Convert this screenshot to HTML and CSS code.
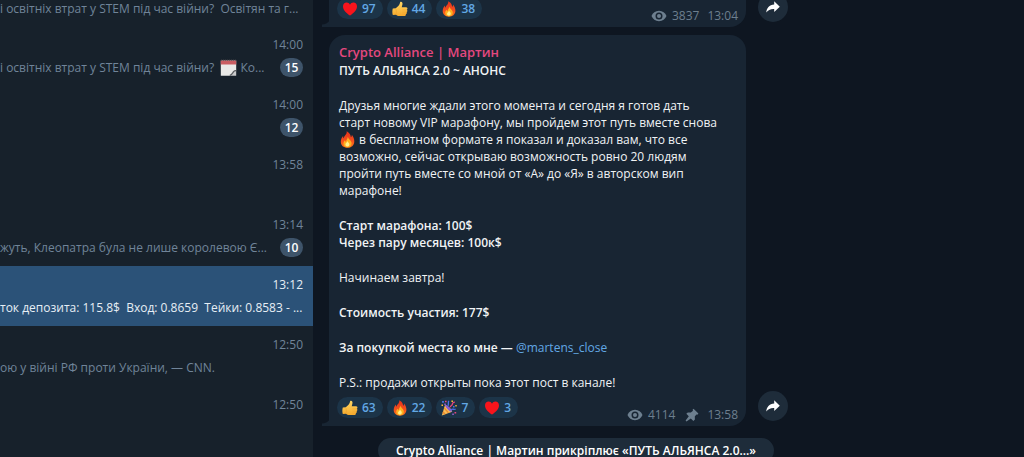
FILE: index.html
```html
<!DOCTYPE html>
<html lang="uk">
<head>
    <meta charset="UTF-8">
    <meta name="viewport" content="width=device-width, initial-scale=1.0">
    <title>Crypto Alliance | Мартин</title>
    <link rel="stylesheet" href="styles.css">
</head>
<body>
    <!-- Shared icons -->
    <svg class="sprite" aria-hidden="true">
        <defs>
            <linearGradient id="flame" x1="0" y1="0" x2="0" y2="1">
                <stop offset="0" stop-color="#e8301a"/>
                <stop offset="0.6" stop-color="#f4511e"/>
                <stop offset="1" stop-color="#ff7a1a"/>
            </linearGradient>
            <linearGradient id="thumb" x1="0" y1="0" x2="0" y2="1">
                <stop offset="0" stop-color="#ffd764"/>
                <stop offset="1" stop-color="#f5a92c"/>
            </linearGradient>
        </defs>
        <symbol id="i-heart" viewBox="0 0 16 16">
            <path fill="#f8141c" d="M8 14.6C5.6 12.9 1 9.4 1 5.4 1 3 2.6 1.5 4.6 1.5c1.500 0 2.700.8 3.400 2.200.7-1.400 1.900-2.200 3.400-2.200 2 0 3.600 1.500 3.600 3.900 0 4-4.600 7.500-7 9.200z"/>
        </symbol>
        <symbol id="i-thumb" viewBox="0 0 16 16">
            <path fill="url(#thumb)" d="M8.600.8c1.300-.3 2 .8 1.900 2.100-.1 1.300-.6 2.400-.8 3.400h4.200c1.900 0 2 2 .8 2.500 1 .5.9 2-.2 2.300.7.700.4 1.900-.7 2.100.3.900-.3 1.800-1.600 1.800H7.500c-1.700 0-2.700-.4-3.500-1.200l-3.200.2c-.6-1.800-.6-4.600 0-6.400l3-.4c1.900-1.200 3.500-3.100 4-4.600.2-.8.200-1.600.8-1.800z"/>
            <path fill="none" stroke="#eca22f" stroke-width=".6" d="M10.500 8.900h4.100M10.400 11.100h4M10.400 13.100h3.300M4 8.200c.5 1.500.5 3.500.1 5.300"/>
        </symbol>
        <symbol id="i-fire" viewBox="0 0 16 16">
            <path fill="url(#flame)" d="M7.200.3c3.300 1.700 3.700 4 4 5.600.7-.5.900-1.300.8-2.300 1.600 1.800 2.500 4.100 2.400 6.400-.2 3.500-2.900 5.700-6.400 5.700-3.700 0-6.300-2.300-6.300-5.700 0-2.500 1.200-4.200 2.200-5.400 0 1 .2 1.800.8 2.200C4.500 4.500 7.800 3.600 7.200.3z"/>
            <path fill="#ffb01f" d="M8.300 5.400c.3 2.200 3.900 3.700 3.500 6.500-.3 2.100-1.900 3.300-3.900 3.300s-3.700-1.300-3.700-3.300c0-1.500.8-2.500 1.500-3.100.1.800.4 1.300.9 1.500-.2-1.900 1.700-2.600 1.700-4.900z"/>
            <path fill="#fff08a" d="M8 9.500c.3 1.300 1.900 1.800 1.800 3.300-.1 1.100-.9 1.800-1.900 1.800S6 13.900 6 12.800c0-1.400 1.800-1.800 2-3.300z"/>
        </symbol>
        <symbol id="i-party" viewBox="0 0 16 16">
            <path fill="#f7c05a" d="M.8 15.400 4 4.900c3 .9 6 3.700 7.200 6.800z"/>
            <path fill="#f08a2d" d="m2.200 10.900 2.600 3-1.500.5-1.800-1.700zM3.500 7.300l4.600 5.200-1.400.5L3 8.700z"/>
            <ellipse cx="7.600" cy="8.300" rx="1.300" ry="4.600" fill="#8a5fd0" transform="rotate(-45 7.600 8.300)"/>
            <path fill="none" stroke="#e8467c" stroke-width="1.300" d="M9.200 7.300c.2-2 2-1.600 2.200-3.200.1-1.400 1.300-1.900 2.500-1.900"/>
            <path fill="none" stroke="#4a6fe8" stroke-width="1.300" d="M6.800 5.800C8.300 4.400 6.500 2.800 7.800.8M10.100 9.800c1.400-1.400 2.800.2 4.600-.8"/>
            <path fill="#4a73e0" d="M1.100 1.100h1.800v1.700H1.100zM12 5.900h1.600v1.600H12z"/>
            <path fill="#e8467c" d="M4 .7h1.600v1.600H4zM13.500 12h1.700v1.600h-1.700z"/>
            <path fill="#f7b938" d="M10.400.6H12v1.500h-1.600zM.5 4.500H2V6H.5zM14.300 5h1.400v1.500h-1.400z"/>
            <path fill="#9c63d8" d="M3.300 3.400h1.500v1.500H3.300zM11.300 13.500h1.500V15h-1.500z"/>
        </symbol>
        <symbol id="i-eye" viewBox="0 0 16 12">
            <path fill="#6d7f8f" fill-rule="evenodd" d="M8 .8c3.500 0 6.300 2.100 7.500 5.200-1.200 3.100-4 5.200-7.500 5.200S1.700 9.100.5 6C1.700 2.900 4.500.8 8 .8zm0 1.700a3.500 3.500 0 1 0 0 7 3.500 3.500 0 0 0 0-7z"/>
            <circle cx="8" cy="6" r="2" fill="#6d7f8f"/>
        </symbol>
        <symbol id="i-pin" viewBox="0 0 14 14">
            <path fill="#6d7f8f" d="M8.500.7 13.400 5.600l-1 1.100-1-.2-1.600 2 .1 3.100-1.500 1.400-2.600-2.600L1.500 13.500l-.9-.9 3.200-4.300-2.500-2.500 1.500-1.400 3.100.1 2.100-1.700-.4-1.100z"/>
        </symbol>
        <symbol id="i-share" viewBox="0 0 14 12">
            <path fill="#fff" d="M8.200.3 13.800 5.700 8.200 11V7.900C4.600 7.700 2.200 8.800.3 11.600.5 7 3.300 3.700 8.200 3.400z"/>
        </symbol>
        <symbol id="i-note" viewBox="0 0 17 17">
            <path fill="#e9e9e7" d="M.8 1.500h15.400v9.200l-6 6H.8z"/>
            <path fill="#c95d62" d="M.8 1.500h15.400v4H.8z"/>
            <path fill="none" stroke="#4b4a4e" stroke-width="1.400" stroke-dasharray="1 1" d="M1.200 1.100h14.800"/>
            <path fill="#c8c9ca" d="M10.300 16.700c.4-2.600 2.500-4.500 5.900-6v6z"/>
            <path fill="none" stroke="#5b5d60" stroke-width="1.300" d="M9.800 16.300c2.400-.4 2.800-2.500 4-3.900.7-.7 1.500-.8 2.400-.7"/>
        </symbol>
    </svg>

    <div class="app">
        <aside class="sidebar">
            <ul class="dialogs">
                <li class="dialog">
                    <div class="row"><p class="preview">і освітніх втрат у STEM під час війни?&nbsp; Освітян та г...</p></div>
                </li>
                <li class="dialog">
                    <time>14:00</time>
                    <div class="row">
                        <p class="preview">і освітніх втрат у STEM під час війни?&nbsp; <svg class="emoji"><use href="#i-note"/></svg> Ко...</p>
                        <span class="badge">15</span>
                    </div>
                </li>
                <li class="dialog">
                    <time>14:00</time>
                    <div class="row"><span class="badge">12</span></div>
                </li>
                <li class="dialog">
                    <time>13:58</time>
                </li>
                <li class="dialog">
                    <time>13:14</time>
                    <div class="row">
                        <p class="preview">жуть, Клеопатра була не лише королевою Є...</p>
                        <span class="badge">10</span>
                    </div>
                </li>
                <li class="dialog active">
                    <time>13:12</time>
                    <div class="row"><p class="preview">ток депозита: 115.8$&nbsp; Вход: 0.8659&nbsp; Тейки: 0.8583 - ...</p></div>
                </li>
                <li class="dialog">
                    <time>12:50</time>
                    <div class="row"><p class="preview">ою у війні РФ проти України, — CNN.</p></div>
                </li>
                <li class="dialog">
                    <time>12:50</time>
                </li>
            </ul>
        </aside>

        <main class="chat">
            <div class="history">
                <div class="message">
                    <article class="bubble">
                        <footer class="bottom">
                            <div class="reactions">
                                <button class="reaction"><svg><use href="#i-heart"/></svg>97</button>
                                <button class="reaction"><svg><use href="#i-thumb"/></svg>44</button>
                                <button class="reaction"><svg><use href="#i-fire"/></svg>38</button>
                            </div>
                            <div class="meta">
                                <svg class="eye"><use href="#i-eye"/></svg>
                                <span>3837</span>
                                <time>13:04</time>
                            </div>
                        </footer>
                    </article>
                    <button class="share" aria-label="Переслати"><svg><use href="#i-share"/></svg></button>
                </div>

                <div class="message">
                    <article class="bubble">
                        <h2 class="author">Crypto Alliance | Мартин</h2>
                        <div class="text">
                            <p><strong>ПУТЬ АЛЬЯНСА 2.0 ~ АНОНС</strong></p>
                            <p>Друзья многие ждали этого момента и сегодня я готов дать<br>
                            старт новому VIP марафону, мы пройдем этот путь вместе снова<br>
                            <svg class="emoji"><use href="#i-fire"/></svg> в бесплатном формате я показал и доказал вам, что все<br>
                            возможно, сейчас открываю возможность ровно 20 людям<br>
                            пройти путь вместе со мной от «А» до «Я» в авторском вип<br>
                            марафоне!</p>
                            <p><strong>Старт марафона: 100$<br>Через пару месяцев: 100к$</strong></p>
                            <p>Начинаем завтра!</p>
                            <p><strong>Стоимость участия: 177$</strong></p>
                            <p><strong>За покупкой места ко мне —</strong> <a href="#martens_close">@martens_close</a></p>
                            <p>P.S.: продажи открыты пока этот пост в канале!</p>
                        </div>
                        <footer class="bottom">
                            <div class="reactions">
                                <button class="reaction"><svg><use href="#i-thumb"/></svg>63</button>
                                <button class="reaction"><svg><use href="#i-fire"/></svg>22</button>
                                <button class="reaction"><svg><use href="#i-party"/></svg>7</button>
                                <button class="reaction"><svg><use href="#i-heart"/></svg>3</button>
                            </div>
                            <div class="meta">
                                <svg class="eye"><use href="#i-eye"/></svg>
                                <span>4114</span>
                                <svg class="pin"><use href="#i-pin"/></svg>
                                <time>13:58</time>
                            </div>
                        </footer>
                    </article>
                    <button class="share" aria-label="Переслати"><svg><use href="#i-share"/></svg></button>
                </div>

                <p class="service">Crypto Alliance | Мартин прикріплює «ПУТЬ АЛЬЯНСА 2.0...»</p>
            </div>
        </main>
    </div>
</body>
</html>
```
FILE: styles.css
```css
* {
    box-sizing: border-box;
    margin: 0;
    padding: 0;
}
body {
    font-family: "Open Sans", "Noto Sans", sans-serif;
    font-size: 12px;
    line-height: 17px;
    color: #f0f3f5;
    background: #0e1621;
    overflow: hidden;
}
button {
    font: inherit;
    border: none;
    cursor: pointer;
}
strong, h2 {
    font-weight: 600;
}
a {
    color: #62a8e5;
    text-decoration: none;
}
.sprite {
    position: absolute;
    width: 0;
    height: 0;
}
.app {
    display: flex;
    height: 100vh;
}

/* Chat list */
.sidebar {
    flex: 0 0 313px;
    background: #17212b;
    overflow: hidden;
}
.dialogs {
    list-style: none;
    margin-top: -2px;
}
.dialog {
    display: flex;
    flex-direction: column;
    gap: 4px;
    height: 60px;
    padding: 10px 10px 0 0;
    color: #708499;
}
.dialog:first-child {
    height: 28px;
    padding-top: 0;
}
.dialog time {
    align-self: flex-end;
}
.row {
    display: flex;
    align-items: center;
    height: 20px;
}
.preview {
    white-space: nowrap;
}
.badge {
    margin-left: auto;
    min-width: 23px;
    padding: 1px 4px;
    border-radius: 10px;
    background: #3e546a;
    color: #fff;
    font-weight: 600;
    text-align: center;
}
.active {
    background: #2b5278;
    color: #e6eef5;
}
.emoji {
    width: 17px;
    height: 17px;
    vertical-align: -4px;
}

/* Messages */
.chat {
    flex: 1;
    overflow: hidden;
    padding-left: 16px;
}
.history {
    display: flex;
    flex-direction: column;
    gap: 8px;
    max-width: 494px;
    margin-top: -31px;
}
.message {
    display: flex;
    align-items: flex-end;
    gap: 12px;
}
.bubble {
    position: relative;
    flex: 0 1 417px;
    padding: 9px 8px 8px 10px;
    border-radius: 16px 16px 16px 0;
    background: #182533;
}
.bubble::before {
    content: "";
    position: absolute;
    left: -7px;
    bottom: 0;
    width: 7px;
    height: 12px;
    background: radial-gradient(circle at 0 0, transparent 9px, #182533 10px);
}
.message:first-child .bubble {
    padding-top: 23px;
}
.author {
    margin-bottom: 1px;
    font-size: 13px;
    color: #e4487f;
}
.text p + p {
    margin-top: 18px;
}
.bottom {
    display: flex;
    justify-content: space-between;
    align-items: flex-end;
    margin-top: 6px;
}
.reactions {
    display: flex;
    gap: 4px;
    margin-left: -2px;
}
.reaction {
    display: flex;
    align-items: center;
    gap: 4px;
    height: 21px;
    padding: 0 7px 0 5px;
    border-radius: 11px;
    background: #1c3448;
    color: #62a8e5;
    font-weight: 600;
}
.reaction svg {
    width: 16px;
    height: 16px;
}
.meta {
    display: flex;
    align-items: center;
    gap: 5px;
    margin-bottom: -5px;
    color: #6d7f8f;
}
.meta time {
    margin-left: 3px;
}
.eye {
    width: 16px;
    height: 12px;
}
.pin {
    width: 14px;
    height: 14px;
    margin-left: 5px;
}
.share {
    display: flex;
    align-items: center;
    justify-content: center;
    width: 30px;
    height: 30px;
    margin-bottom: 5px;
    border-radius: 50%;
    background: #1e2c3a;
}
.share svg {
    width: 14px;
    height: 12px;
}
.service {
    align-self: center;
    margin-top: 4px;
    padding: 4px 18px;
    border-radius: 14px;
    background: #1e2c3a;
    color: #fff;
    font-weight: 600;
}
```
